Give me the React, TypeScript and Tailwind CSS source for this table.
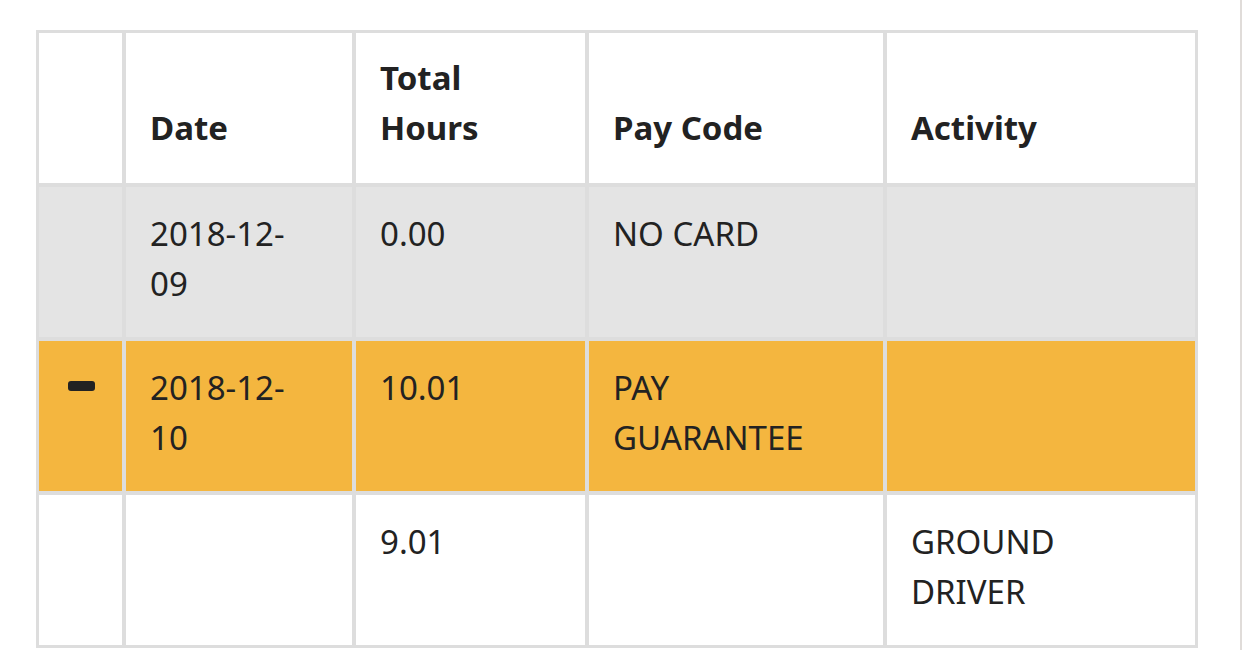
import React from "react";

const cell = "px-6 pt-[22px] pb-[28px]";
const head = "px-6 pt-[20px] pb-[30px] font-bold flex items-end";

export default function App() {
  return (
    <div className="relative w-[1242px] h-[650px] overflow-hidden bg-white" style={{ fontFamily: '"Noto Sans", "Open Sans", sans-serif' }}>
      <div className="ml-[36px] mt-[30px] w-[1162px] grid grid-cols-[83px_226px_229px_294px_308px] gap-[4px] p-[3px] bg-[#dddddd] text-[33px] leading-[50px] text-[#222222]">
        {/* header */}
        <div className="bg-white" />
        <div className={`bg-white ${head}`}>Date</div>
        <div className={`bg-white ${head}`}>Total Hours</div>
        <div className={`bg-white ${head}`}>Pay Code</div>
        <div className={`bg-white ${head}`}>Activity</div>

        {/* row 1 */}
        <div className="bg-[#e4e4e4]" />
        <div className={`bg-[#e4e4e4] ${cell}`}>2018-12-<br />09</div>
        <div className={`bg-[#e4e4e4] ${cell}`}>0.00</div>
        <div className={`bg-[#e4e4e4] ${cell}`}>NO CARD</div>
        <div className="bg-[#e4e4e4]" />

        {/* row 2 */}
        <div className="bg-[#f4b63f] flex justify-center pt-[40px] pl-[2px]">
          <div className="w-[27px] h-[10px] rounded-[3px] bg-[#222222]" />
        </div>
        <div className={`bg-[#f4b63f] ${cell}`}>2018-12-<br />10</div>
        <div className={`bg-[#f4b63f] ${cell}`}>10.01</div>
        <div className={`bg-[#f4b63f] ${cell}`}>PAY<br />GUARANTEE</div>
        <div className="bg-[#f4b63f]" />

        {/* row 3 */}
        <div className="bg-white" />
        <div className="bg-white" />
        <div className={`bg-white ${cell}`}>9.01</div>
        <div className="bg-white" />
        <div className={`bg-white ${cell}`}>GROUND<br />DRIVER</div>
      </div>
      <div className="absolute top-0 right-0 w-[2px] h-full bg-[#e0dcd9]" />
    </div>
  );
}
